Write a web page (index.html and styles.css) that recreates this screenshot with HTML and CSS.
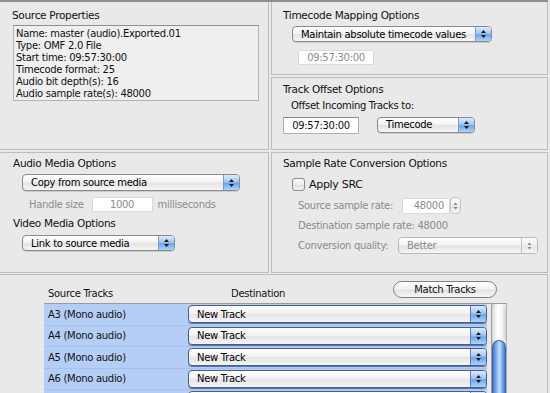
FILE: index.html
```html
<!DOCTYPE html>
<html lang="en">
<head>
    <meta charset="UTF-8">
    <title>OMF Import Options</title>
    <link rel="stylesheet" href="styles.css">
</head>
<body>
    <div class="window">
        <div class="grid">
            <div class="panel edge source-panel">
                <div class="title">Source Properties</div>
                <div class="info-box">
                    <div>Name: master (audio).Exported.01</div>
                    <div>Type: OMF 2.0 File</div>
                    <div>Start time: 09:57:30:00</div>
                    <div>Timecode format: 25</div>
                    <div>Audio bit depth(s): 16</div>
                    <div>Audio sample rate(s): 48000</div>
                </div>
            </div>

            <div class="stack">
                <div class="panel mapping-panel">
                    <div class="title">Timecode Mapping Options</div>
                    <div class="popup popup-mapping">
                        <span class="popup-label">Maintain absolute timecode values</span>
                        <span class="popup-cap"><svg width="7" height="10" viewBox="0 0 7 10"><path d="M3.5 1L6 4H1Z M3.5 9L6 6H1Z" fill="#1c1c1c"/></svg></span>
                    </div>
                    <div class="field field-tc disabled">09:57:30:00</div>
                </div>
                <div class="panel offset-panel">
                    <div class="title">Track Offset Options</div>
                    <div class="sub-label">Offset Incoming Tracks to:</div>
                    <div class="offset-row">
                        <div class="field field-offset">09:57:30:00</div>
                        <div class="popup popup-timecode">
                            <span class="popup-label">Timecode</span>
                            <span class="popup-cap"><svg width="7" height="10" viewBox="0 0 7 10"><path d="M3.5 1L6 4H1Z M3.5 9L6 6H1Z" fill="#1c1c1c"/></svg></span>
                        </div>
                    </div>
                </div>
            </div>

            <div class="panel edge media-panel">
                <div class="title">Audio Media Options</div>
                <div class="popup popup-audio">
                    <span class="popup-label">Copy from source media</span>
                    <span class="popup-cap"><svg width="7" height="10" viewBox="0 0 7 10"><path d="M3.5 1L6 4H1Z M3.5 9L6 6H1Z" fill="#1c1c1c"/></svg></span>
                </div>
                <div class="handle-row disabled">
                    <span>Handle size</span>
                    <div class="field field-handle">1000</div>
                    <span>milliseconds</span>
                </div>
                <div class="title video-title">Video Media Options</div>
                <div class="popup popup-video">
                    <span class="popup-label">Link to source media</span>
                    <span class="popup-cap"><svg width="7" height="10" viewBox="0 0 7 10"><path d="M3.5 1L6 4H1Z M3.5 9L6 6H1Z" fill="#1c1c1c"/></svg></span>
                </div>
            </div>

            <div class="panel src-panel">
                <div class="title">Sample Rate Conversion Options</div>
                <label class="check-row">
                    <span class="checkbox"></span>
                    <span class="check-label">Apply SRC</span>
                </label>
                <div class="src-row disabled">
                    <span class="src-label">Source sample rate:</span>
                    <div class="field field-rate">48000</div>
                    <span class="stepper"><svg width="7" height="10" viewBox="0 0 7 10"><path d="M3.5 1.5L5.5 4H1.5Z M3.5 8.5L5.5 6H1.5Z" fill="#8a8a8a"/></svg></span>
                </div>
                <div class="src-line disabled">Destination sample rate: 48000</div>
                <div class="src-row disabled">
                    <span class="src-label">Conversion quality:</span>
                    <div class="popup popup-quality off">
                        <span class="popup-label">Better</span>
                        <span class="popup-cap"><svg width="7" height="10" viewBox="0 0 7 10"><path d="M3.5 1.5L5.5 4H1.5Z M3.5 8.5L5.5 6H1.5Z" fill="#8a8a8a"/></svg></span>
                    </div>
                </div>
            </div>
        </div>

        <div class="panel edge tracks-panel">
            <div class="tracks-head">
                <span class="head-source">Source Tracks</span>
                <span class="head-dest">Destination</span>
                <button class="match-btn">Match Tracks</button>
            </div>
            <div class="table">
                <div class="rows" id="rows"></div>
                <div class="scrollbar">
                    <div class="scroll-top"></div>
                    <div class="scroll-thumb"></div>
                </div>
            </div>
        </div>
    </div>

    <script>
        // track rows; the last one is only partly visible
        var tracks = ['A3 (Mono audio)', 'A4 (Mono audio)', 'A5 (Mono audio)', 'A6 (Mono audio)', ''];
        var rows = document.getElementById('rows');
        tracks.forEach(function(name) {
            var row = document.createElement('div');
            row.className = 'track-row';
            row.innerHTML = `
                <div class="track-name">${name}</div>
                <div class="popup popup-track">
                    <span class="popup-label">${name ? 'New Track' : ''}</span>
                    <span class="popup-cap"><svg width="7" height="10" viewBox="0 0 7 10"><path d="M3.5 1L6 4H1Z M3.5 9L6 6H1Z" fill="#1c1c1c"/></svg></span>
                </div>
            `;
            rows.appendChild(row);
        });
    </script>
</body>
</html>
```

FILE: styles.css
```css
body {
    margin: 0;
    background: #e9e9e9;
    font-family: "DejaVu Sans", sans-serif;
    font-size: 10px;
    letter-spacing: -0.3px;
    color: #111;
    width: 550px;
    height: 393px;
    overflow: hidden;
}
.window {
    width: 548px;
    border-top: 2px solid #8e8e8e;
}
.grid {
    display: grid;
    grid-template-columns: 269px 277px;
    grid-template-rows: 148px 121px;
    gap: 2px;
}
.stack {
    display: grid;
    grid-template-rows: 73px 73px;
    gap: 2px;
}
.panel {
    border: 1px solid #bdbdbd;
    box-sizing: border-box;
}
.panel.edge {
    border-left: none;
}
.source-panel,
.mapping-panel {
    border-top: none;
}
.title {
    font-size: 10.5px;
    line-height: 13px;
}
.disabled {
    color: #8c8c8c;
}

/* source properties */
.source-panel {
    padding: 7px 0 0 12px;
}
.info-box {
    margin: 3px 0 0 1px;
    width: 246px;
    height: 76px;
    box-sizing: border-box;
    border: 1px solid #b4b4b4;
    border-top-color: #8f8f8f;
    background: #efefef;
    padding: 2px 0 0 2px;
    line-height: 12px;
}

/* popups */
.popup {
    display: flex;
    align-items: center;
    height: 16px;
    box-sizing: border-box;
    border: 1px solid #8a8a8a;
    border-radius: 4px;
    background: linear-gradient(#ffffff, #f3f3f3 45%, #e4e4e4 55%, #f6f6f6);
    box-shadow: 0 1px 0 rgba(0, 0, 0, 0.12);
    color: #000;
}
.popup-label {
    flex: 1;
    padding-left: 8px;
    white-space: nowrap;
    overflow: hidden;
}
.popup-cap {
    align-self: stretch;
    width: 15px;
    display: flex;
    align-items: center;
    justify-content: center;
    border-left: 1px solid #7b9bd0;
    border-radius: 0 3px 3px 0;
    background: linear-gradient(#dcebfd, #a3c6f4 45%, #6ea4ec 55%, #a9d6fc);
}
.popup.off {
    border-color: #b9b9b9;
    color: #8c8c8c;
    box-shadow: none;
}
.popup.off .popup-cap {
    border-left-color: #c4c4c4;
    background: linear-gradient(#fbfbfb, #efefef 50%, #e6e6e6 51%, #f4f4f4);
}

/* fields */
.field {
    height: 15px;
    box-sizing: border-box;
    border: 1px solid #b0b0b0;
    border-top-color: #8a8a8a;
    background: #fff;
    text-align: center;
    line-height: 13px;
}

/* timecode mapping */
.mapping-panel {
    padding: 7px 0 0 11px;
}
.popup-mapping {
    width: 200px;
    margin: 4px 0 0 9px;
}
.field-tc {
    width: 76px;
    margin: 8px 0 0 15px;
    border-color: #dadada;
    color: #8c8c8c;
}

/* track offset */
.offset-panel {
    padding: 5px 0 0 11px;
}
.sub-label {
    margin: 3px 0 0 8px;
    line-height: 13px;
}
.offset-row {
    display: flex;
    align-items: center;
    gap: 18px;
    margin: 5px 0 0 0;
}
.field-offset {
    width: 76px;
    height: 17px;
    line-height: 15px;
}
.popup-timecode {
    width: 98px;
    margin-top: -2px;
}

/* media options */
.media-panel {
    padding: 4px 0 0 13px;
}
.popup-audio {
    width: 218px;
    height: 17px;
    margin: 4px 0 0 9px;
}
.handle-row {
    display: flex;
    align-items: center;
    gap: 5px;
    margin: 6px 0 0 16px;
}
.field-handle {
    width: 61px;
    color: #8c8c8c;
    border-color: #dadada;
    margin-left: 3px;
}
.video-title {
    margin-top: 5px;
}
.popup-video {
    width: 153px;
    margin: 5px 0 0 9px;
}

/* sample rate conversion */
.src-panel {
    padding: 4px 0 0 11px;
}
.check-row {
    display: flex;
    align-items: center;
    gap: 4px;
    margin: 8px 0 0 9px;
}
.checkbox {
    width: 13px;
    height: 13px;
    box-sizing: border-box;
    border: 1px solid #8a8a8a;
    border-radius: 3px;
    background: linear-gradient(#ffffff, #ececec 50%, #dedede 51%, #f2f2f2);
}
.check-label {
    font-size: 11px;
}
.src-row {
    display: flex;
    align-items: center;
    margin: 6px 0 0 15px;
}
.src-label {
    width: 104px;
}
.field-rate {
    width: 48px;
    height: 16px;
    text-align: right;
    padding-right: 5px;
    color: #8c8c8c;
    border-color: #dadada;
}
.stepper {
    width: 11px;
    height: 17px;
    display: flex;
    align-items: center;
    justify-content: center;
    border: 1px solid #c4c4c4;
    border-radius: 4px;
    box-sizing: border-box;
    background: linear-gradient(#fbfbfb, #eeeeee 50%, #e4e4e4 51%, #f4f4f4);
}
.src-line {
    margin: 6px 0 0 15px;
}
.popup-quality {
    width: 140px;
    height: 17px;
    margin-left: -4px;
}

/* tracks */
.tracks-panel {
    margin-top: 1px;
    height: 130px;
    border-bottom: none;
}
.tracks-head {
    display: flex;
    align-items: center;
    height: 28px;
    padding-left: 48px;
}
.head-source {
    width: 183px;
    padding-top: 8px;
}
.head-dest {
    width: 162px;
    padding-top: 8px;
}
.match-btn {
    width: 104px;
    height: 17px;
    margin-top: 1px;
    padding: 0;
    font-family: "DejaVu Sans", sans-serif;
    font-size: 10px;
    letter-spacing: -0.3px;
    color: #111;
    border: 1px solid #7f7f7f;
    border-radius: 9px;
    background: linear-gradient(#ffffff, #f3f3f3 45%, #e2e2e2 55%, #f7f7f7);
}
.table {
    display: flex;
    margin-left: 44px;
    width: 462px;
    border-top: 1px solid #9a9a9a;
    border-right: 1px solid #b0b0b0;
}
.rows {
    flex: 1;
}
.track-row {
    display: flex;
    align-items: center;
    height: 21.5px;
    box-sizing: border-box;
    background: #b5cef5;
    border-bottom: 1px solid #a6c1ec;
}
.track-name {
    width: 144px;
    padding-left: 4px;
    box-sizing: border-box;
}
.popup-track {
    width: 299px;
    height: 18px;
    border-color: #4f5f7a;
    box-shadow: 0 1px 0 #4c78c2;
}
.popup-track .popup-cap {
    border-left-color: #5b7fbf;
}
.scrollbar {
    width: 14px;
    margin-left: 4px;
    background: linear-gradient(to right, #c9c9c9, #f4f4f4 30%, #ffffff 60%, #e6e6e6);
    border-left: 1px solid #9d9d9d;
    display: flex;
    flex-direction: column;
}
.scroll-top {
    height: 36px;
    border-radius: 7px 7px 0 0;
    background: linear-gradient(to right, #d8d8d8, #ffffff 40%, #f6f6f6 70%, #cfcfcf);
}
.scroll-thumb {
    flex: 1;
    border-radius: 7px 7px 0 0;
    border: 1px solid #3a62a8;
    border-bottom: none;
    background: linear-gradient(to right, #4677d4, #90bdf5 35%, #c4e2ff 55%, #7fb1f0 75%, #3f73d3);
}
```
